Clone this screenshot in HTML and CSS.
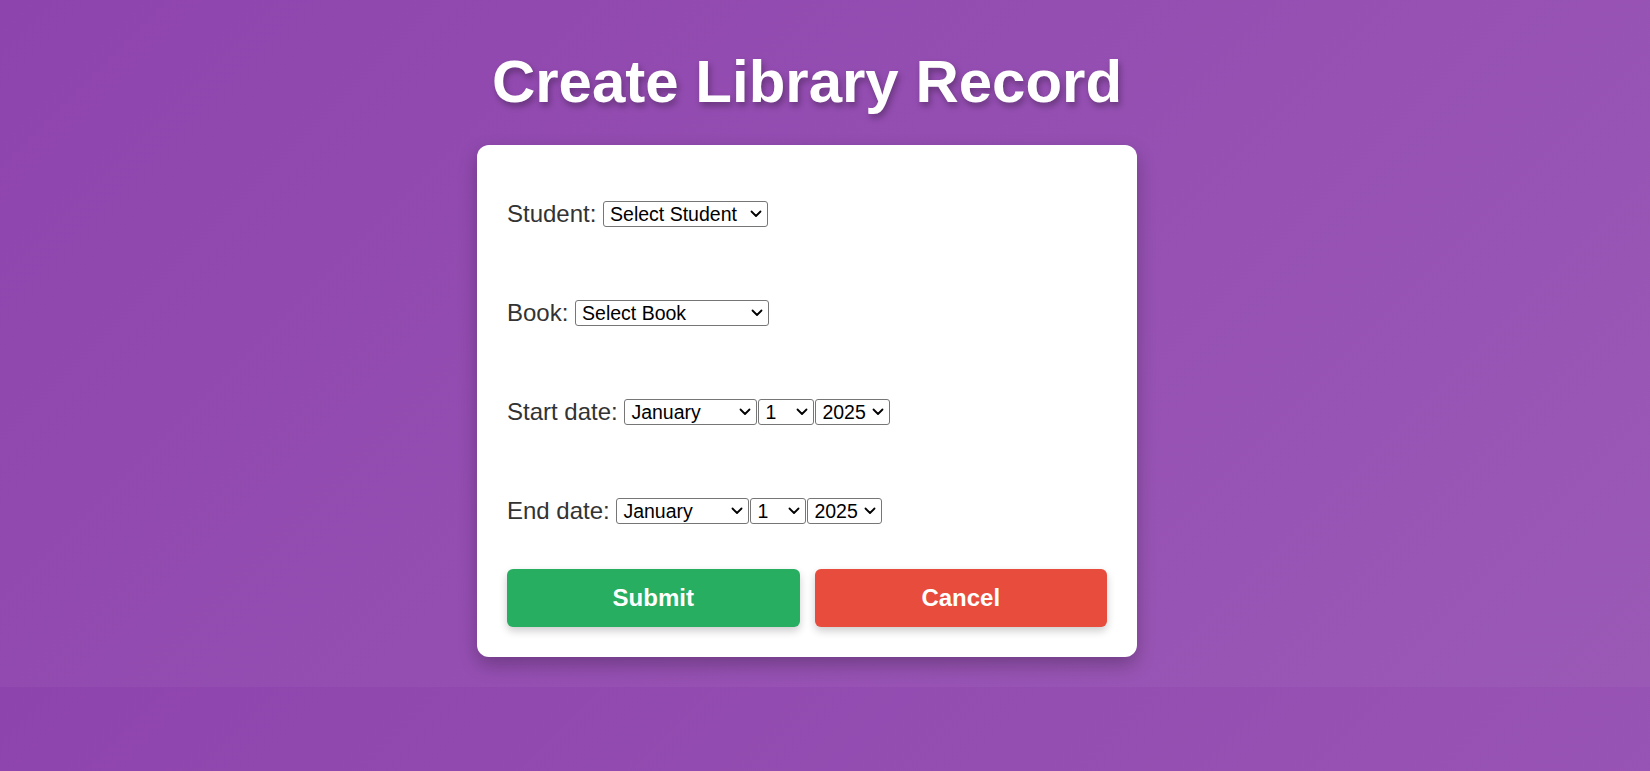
FILE: index.html
```html
<!DOCTYPE html>
<html lang="en">
<head>
<meta charset="utf-8">
<title>Create Library Record</title>
<link rel="stylesheet" href="styles.css">
</head>
<body>
<div class="page">
  <h1 class="title">Create Library Record</h1>
  <form class="card">
    <div class="fields">
      <div class="row">
        <label class="label">Student:</label> <select class="sel student"><option>Select Student</option><option>Alice Smith</option><option>Bob Jones</option></select>
      </div>
      <div class="row">
        <label class="label">Book:</label> <select class="sel book"><option>Select Book</option><option>The Great Gatsby</option></select>
      </div>
      <div class="row">
        <label class="label">Start date:</label> <span class="dates"><select class="sel month"><option>January</option><option>February</option><option>March</option><option>April</option><option>May</option><option>June</option><option>July</option><option>August</option><option>September</option><option>October</option><option>November</option><option>December</option></select><select class="sel day"><option>1</option><option>2</option><option>3</option><option>10</option><option>20</option><option>28</option><option>29</option><option>30</option><option>31</option></select><select class="sel year"><option>2025</option><option>2024</option><option>2026</option></select></span>
      </div>
      <div class="row">
        <label class="label">End date:</label> <span class="dates"><select class="sel month"><option>January</option><option>February</option><option>March</option><option>April</option><option>May</option><option>June</option><option>July</option><option>August</option><option>September</option><option>October</option><option>November</option><option>December</option></select><select class="sel day"><option>1</option><option>2</option><option>3</option><option>10</option><option>20</option><option>28</option><option>29</option><option>30</option><option>31</option></select><select class="sel year"><option>2025</option><option>2024</option><option>2026</option></select></span>
      </div>
    </div>
    <div class="actions">
      <button type="submit" class="btn btn-submit">Submit</button>
      <button type="button" class="btn btn-cancel">Cancel</button>
    </div>
  </form>
</div>
</body>
</html>
```
FILE: styles.css
```css
html {
  margin: 0;
}
body {
  margin: 0;
  font-family: "Liberation Sans", Arial, sans-serif;
  background: linear-gradient(135deg, #8e44ad, #9b59b6);
}
.page {
  display: flex;
  flex-direction: column;
  align-items: center;
  padding: 47px 36px 30px 0;
}
.title {
  margin: 0 0 29px;
  font-size: 60px;
  font-weight: bold;
  line-height: 69px;
  color: #fff;
  text-shadow: 2px 4px 6px rgba(0, 0, 0, 0.3);
}
.card {
  width: 600px;
  padding: 30px;
  background: #fff;
  border-radius: 12px;
  box-shadow: 0 8px 18px rgba(0, 0, 0, 0.25);
}
.fields {
  display: flex;
  flex-direction: column;
  gap: 71px;
  padding-top: 23px;
}
.row {
  height: 28px;
  line-height: 28px;
  font-size: 24px;
  color: #333;
}
.label {
  color: #333;
  vertical-align: middle;
}
.dates {
  display: inline-flex;
  gap: 1px;
  vertical-align: middle;
}
.sel {
  -webkit-appearance: none;
  appearance: none;
  box-sizing: border-box;
  height: 26px;
  margin: 0;
  padding: 0 22px 0 6px;
  font-family: "Liberation Sans", Arial, sans-serif;
  font-size: 19.5px;
  line-height: 24px;
  color: #000;
  background-color: #fff;
  background-image: url("data:image/svg+xml;utf8,<svg xmlns='http://www.w3.org/2000/svg' width='12' height='8' viewBox='0 0 12 8'><path d='M1.5 1.5 L6 6 L10.5 1.5' fill='none' stroke='black' stroke-width='1.8' stroke-linecap='round' stroke-linejoin='round'/></svg>");
  background-repeat: no-repeat;
  background-position: right 5px center;
  background-size: 12px 8px;
  border: 1px solid #767676;
  border-radius: 3px;
  vertical-align: middle;
}
.student {
  width: 165px;
}
.book {
  width: 194px;
}
.month {
  width: 133px;
}
.day {
  width: 56px;
}
.year {
  width: 75px;
}
.actions {
  display: flex;
  gap: 15px;
  margin-top: 46px;
}
.btn {
  flex: 1;
  height: 58px;
  border: none;
  border-radius: 6px;
  color: #fff;
  font-family: "Liberation Sans", Arial, sans-serif;
  font-size: 24px;
  font-weight: bold;
  box-shadow: 0 4px 8px rgba(0, 0, 0, 0.2);
  cursor: pointer;
}
.btn-submit {
  background: #27ae60;
}
.btn-cancel {
  background: #e74c3c;
}
```
